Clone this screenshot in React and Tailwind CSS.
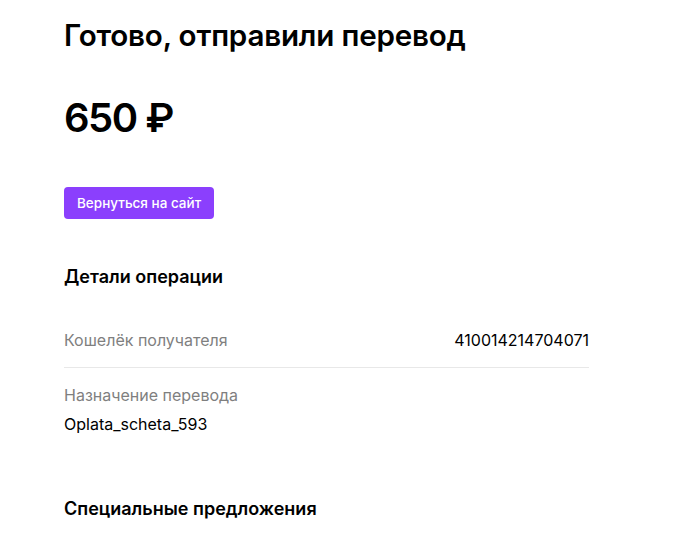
import React from 'react';

const App = () => {
  return (
    <div className="min-h-screen bg-white font-['Inter',sans-serif] text-black">
      <div className="w-[525px] ml-[64px] pt-[16px]">
        <h1 className="text-[29.6px] leading-[38px] font-semibold tracking-[-0.2px]">Готово, отправили перевод</h1>

        <div className="mt-[39px] text-[40px] leading-[50px] font-semibold tracking-[-1.5px]">650 ₽</div>

        <button className="mt-[44px] h-[32px] px-[13px] rounded-[4px] bg-[#8b3ffd] text-white text-[13.5px] font-medium">
          Вернуться на сайт
        </button>

        {/* Operation details */}
        <h2 className="mt-[46px] text-[18px] leading-[24px] font-semibold">Детали операции</h2>

        <div className="mt-[40px] flex justify-between items-center pb-[16px] border-b border-[#e8e8e8] text-[16px] leading-[22px]">
          <span className="text-[#7f7f7f]">Кошелёк получателя</span>
          <span>410014214704071</span>
        </div>

        <div className="pt-[16px] text-[16px] leading-[22px]">
          <div className="text-[#7f7f7f]">Назначение перевода</div>
          <div className="mt-[7px]">Oplata_scheta_593</div>
        </div>

        <h2 className="mt-[62px] text-[18px] leading-[24px] font-semibold">Специальные предложения</h2>
      </div>
    </div>
  );
};

export default App;
